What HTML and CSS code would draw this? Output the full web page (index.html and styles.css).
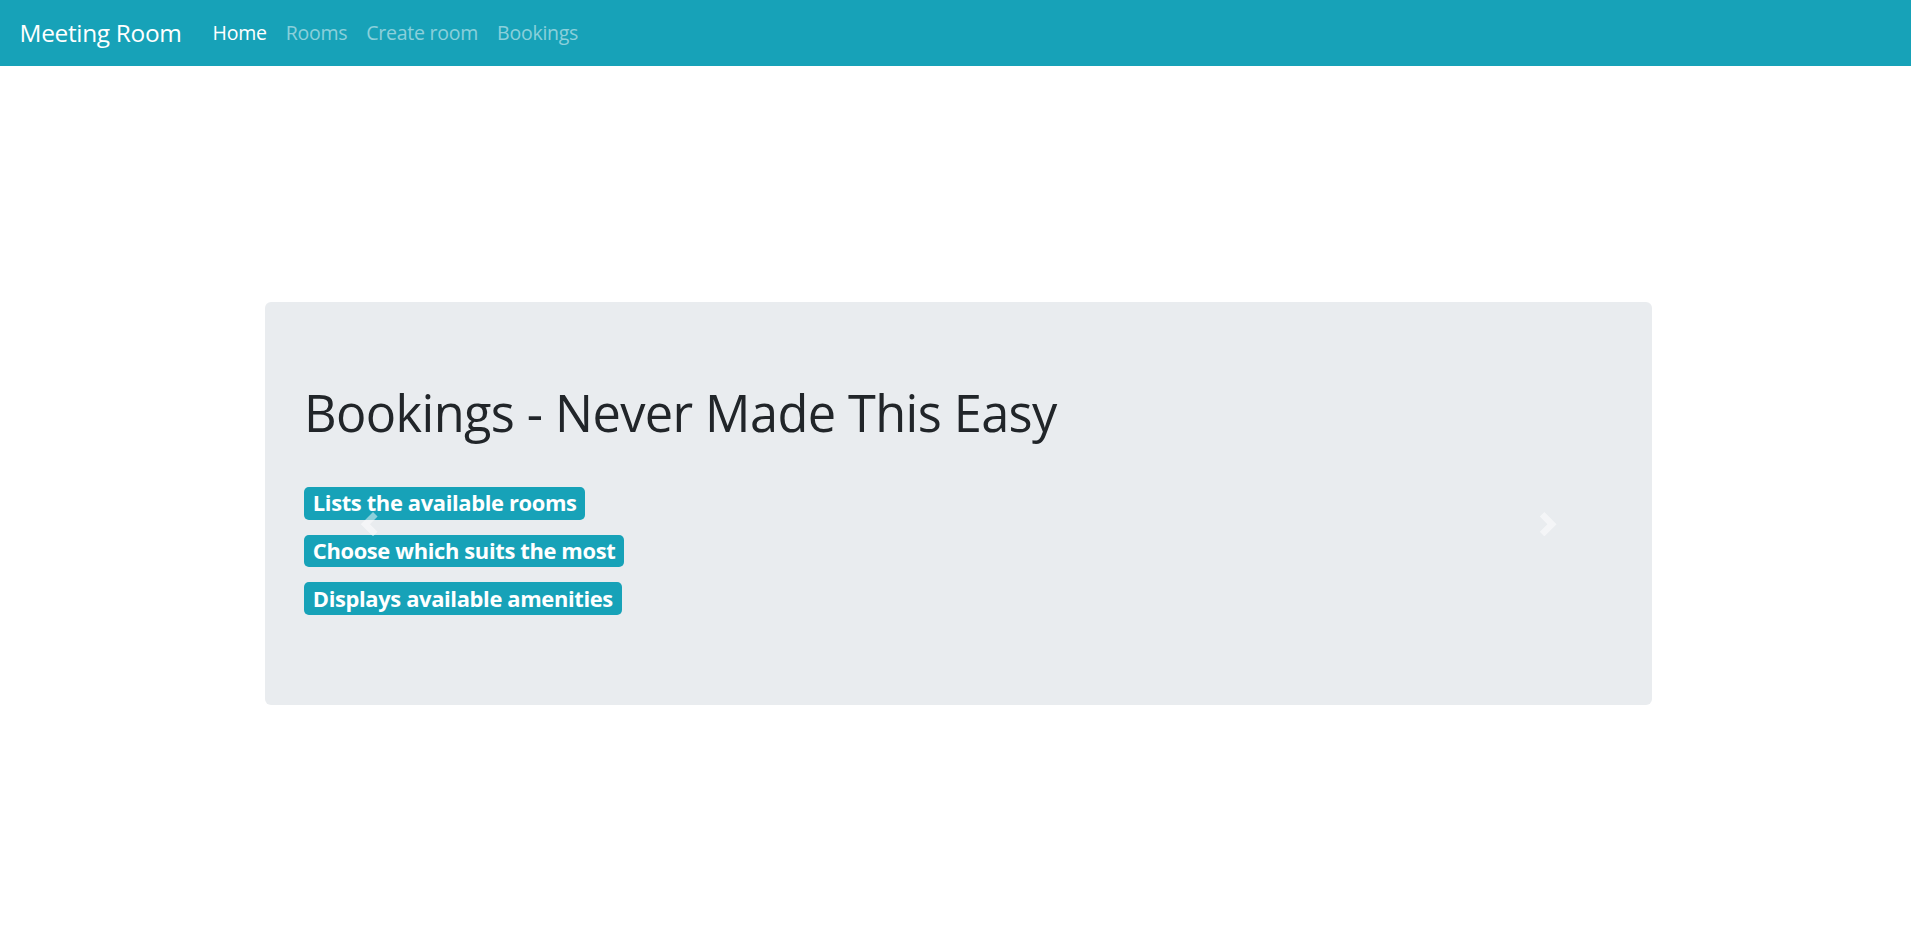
FILE: index.html
```html
<!DOCTYPE html>
<html lang="en">
<head>
<meta charset="utf-8">
<title>Meeting Room</title>
<link rel="stylesheet" href="styles.css">
</head>
<body>
<nav class="navbar">
  <a class="brand" href="#">Meeting Room</a>
  <ul class="nav">
    <li><a class="nav-link active" href="#">Home</a></li>
    <li><a class="nav-link" href="#">Rooms</a></li>
    <li><a class="nav-link" href="#">Create room</a></li>
    <li><a class="nav-link" href="#">Bookings</a></li>
  </ul>
</nav>
<main class="page">
  <section class="jumbotron">
    <h1 class="title">Bookings - Never Made This Easy</h1>
    <div class="features">
      <h4 class="feature"><span class="badge">Lists the available rooms</span></h4>
      <h4 class="feature"><span class="badge">Choose which suits the most</span></h4>
      <h4 class="feature"><span class="badge">Displays available amenities</span></h4>
    </div>
    <a class="control prev" href="#" aria-label="Previous">
      <svg class="control-icon" viewBox="0 0 8 8"><path d="M5.25 0l-4 4 4 4 1.5-1.5L4.25 4l2.5-2.5L5.25 0z"/></svg>
    </a>
    <a class="control next" href="#" aria-label="Next">
      <svg class="control-icon" viewBox="0 0 8 8"><path d="M2.75 0l-1.5 1.5L3.75 4l-2.5 2.5L2.75 8l4-4-4-4z"/></svg>
    </a>
  </section>
</main>
</body>
</html>
```
FILE: styles.css
```css
html {
  font-size: 19.5px;
}
body {
  margin: 0;
  font-family: "Open Sans", "Noto Sans", "DejaVu Sans", sans-serif;
  color: #212529;
  line-height: 1.5;
  background: #fff;
}
a {
  text-decoration: none;
}
.navbar {
  display: flex;
  align-items: center;
  height: 66px;
  box-sizing: border-box;
  padding: 0 19.5px;
  background: #17a2b8;
}
.brand {
  font-size: 24.4px;
  color: #fff;
  margin-right: 21.5px;
  letter-spacing: -0.3px;
}
.nav {
  display: flex;
  list-style: none;
  margin: 0;
  padding: 0;
}
.nav-link {
  display: block;
  padding: 0 9.5px;
  font-size: 19.5px;
  color: rgba(255, 255, 255, 0.5);
  letter-spacing: -0.25px;
}
.nav-link.active {
  color: #fff;
}
.page {
  padding-top: 236px;
}
.jumbotron {
  position: relative;
  box-sizing: border-box;
  width: 1387px;
  margin: 0 0 0 265px;
  padding: 78px 39px;
  background: #e9ecef;
  border-radius: 6px;
}
.title {
  margin: 3px 0 43px;
  font-size: 50.5px;
  font-weight: 400;
  line-height: 1.2;
  letter-spacing: -0.6px;
}
.features {
  display: flex;
  flex-direction: column;
  align-items: flex-start;
  gap: 15px;
  padding-bottom: 12px;
}
.feature {
  margin: 0;
  line-height: 1;
}
.badge {
  display: inline-block;
  padding: 5.5px 8.8px;
  font-size: 21.9px;
  font-weight: 700;
  line-height: 1;
  color: #fff;
  background: #17a2b8;
  border-radius: 4.9px;
  letter-spacing: -0.35px;
}
.control {
  position: absolute;
  top: 0;
  height: 444px;
  width: 15%;
  display: flex;
  align-items: center;
  justify-content: center;
  opacity: 0.5;
}
.control.prev {
  left: 0;
}
.control.next {
  right: 0;
}
.control-icon {
  width: 24.4px;
  height: 24.4px;
  fill: #fff;
}
```
